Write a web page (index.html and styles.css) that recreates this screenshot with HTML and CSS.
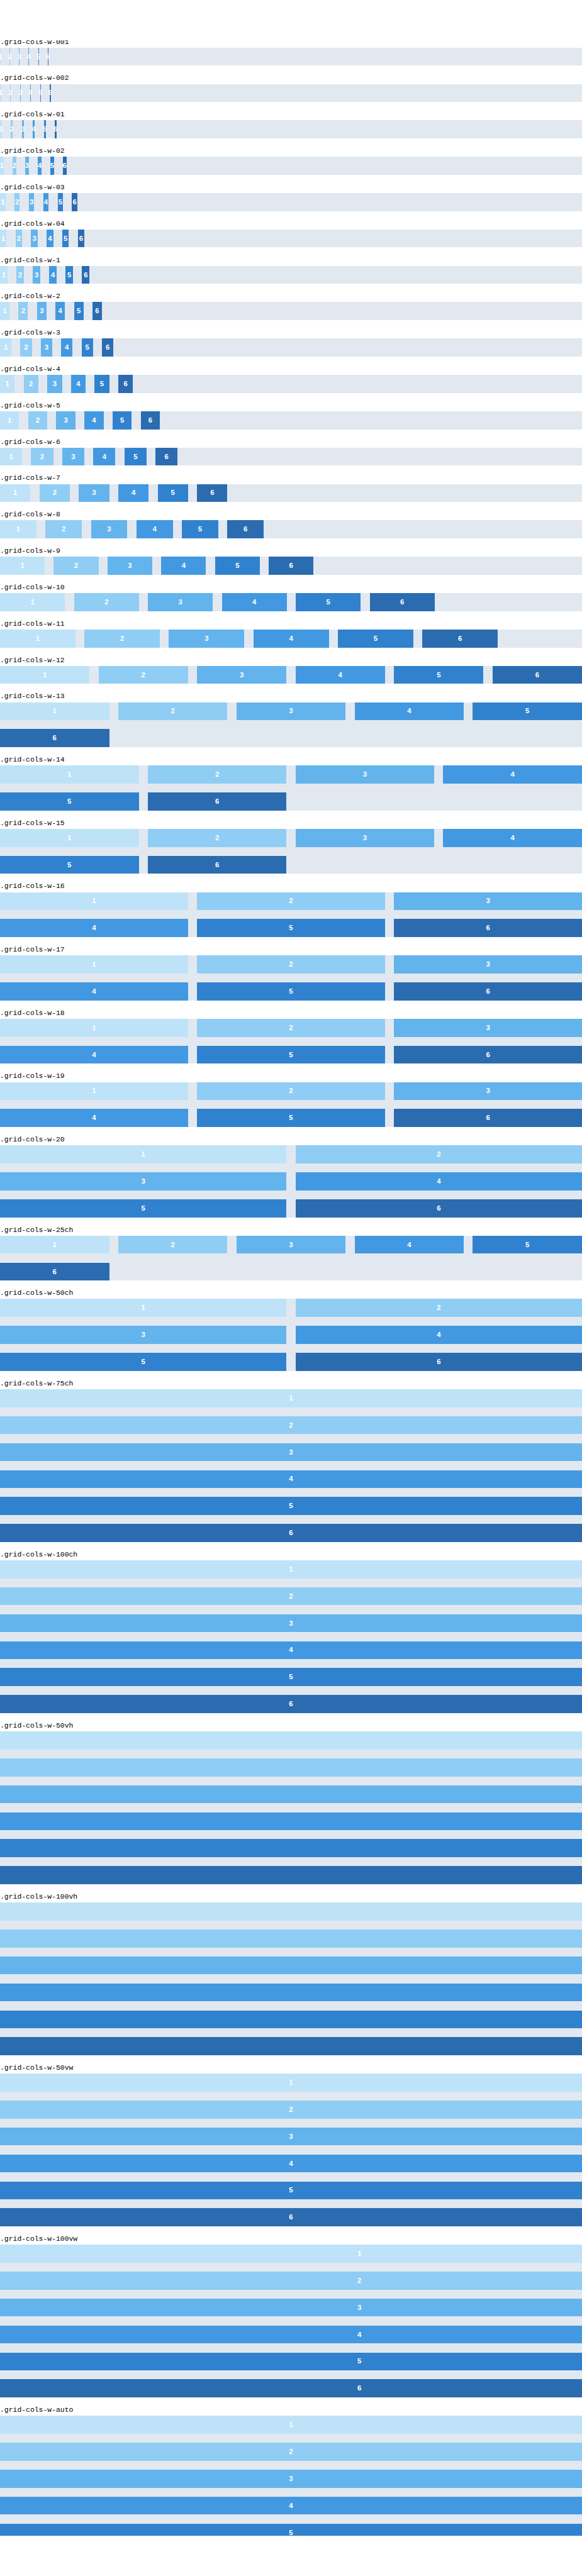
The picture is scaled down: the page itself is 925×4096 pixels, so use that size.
FILE: index.html
```html
<!DOCTYPE html>
<html lang="en">
<head>
<meta charset="utf-8">
<title>Grid column widths</title>
<link rel="stylesheet" href="styles.css">
</head>
<body>
<main class="viewport">
<div class="list">
<h2>.grid-cols-w-001</h2>
<div class="grid w-001"><b>1</b><b>2</b><b>3</b><b>4</b><b>5</b><b>6</b></div>
<h2>.grid-cols-w-002</h2>
<div class="grid w-002"><b>1</b><b>2</b><b>3</b><b>4</b><b>5</b><b>6</b></div>
<h2>.grid-cols-w-01</h2>
<div class="grid w-01"><b>1</b><b>2</b><b>3</b><b>4</b><b>5</b><b>6</b></div>
<h2>.grid-cols-w-02</h2>
<div class="grid w-02"><b>1</b><b>2</b><b>3</b><b>4</b><b>5</b><b>6</b></div>
<h2>.grid-cols-w-03</h2>
<div class="grid w-03"><b>1</b><b>2</b><b>3</b><b>4</b><b>5</b><b>6</b></div>
<h2>.grid-cols-w-04</h2>
<div class="grid w-04"><b>1</b><b>2</b><b>3</b><b>4</b><b>5</b><b>6</b></div>
<h2>.grid-cols-w-1</h2>
<div class="grid w-1"><b>1</b><b>2</b><b>3</b><b>4</b><b>5</b><b>6</b></div>
<h2>.grid-cols-w-2</h2>
<div class="grid w-2"><b>1</b><b>2</b><b>3</b><b>4</b><b>5</b><b>6</b></div>
<h2>.grid-cols-w-3</h2>
<div class="grid w-3"><b>1</b><b>2</b><b>3</b><b>4</b><b>5</b><b>6</b></div>
<h2>.grid-cols-w-4</h2>
<div class="grid w-4"><b>1</b><b>2</b><b>3</b><b>4</b><b>5</b><b>6</b></div>
<h2>.grid-cols-w-5</h2>
<div class="grid w-5"><b>1</b><b>2</b><b>3</b><b>4</b><b>5</b><b>6</b></div>
<h2>.grid-cols-w-6</h2>
<div class="grid w-6"><b>1</b><b>2</b><b>3</b><b>4</b><b>5</b><b>6</b></div>
<h2>.grid-cols-w-7</h2>
<div class="grid w-7"><b>1</b><b>2</b><b>3</b><b>4</b><b>5</b><b>6</b></div>
<h2>.grid-cols-w-8</h2>
<div class="grid w-8"><b>1</b><b>2</b><b>3</b><b>4</b><b>5</b><b>6</b></div>
<h2>.grid-cols-w-9</h2>
<div class="grid w-9"><b>1</b><b>2</b><b>3</b><b>4</b><b>5</b><b>6</b></div>
<h2>.grid-cols-w-10</h2>
<div class="grid w-10"><b>1</b><b>2</b><b>3</b><b>4</b><b>5</b><b>6</b></div>
<h2>.grid-cols-w-11</h2>
<div class="grid w-11"><b>1</b><b>2</b><b>3</b><b>4</b><b>5</b><b>6</b></div>
<h2>.grid-cols-w-12</h2>
<div class="grid fill-6"><b>1</b><b>2</b><b>3</b><b>4</b><b>5</b><b>6</b></div>
<h2>.grid-cols-w-13</h2>
<div class="grid fill-5"><b>1</b><b>2</b><b>3</b><b>4</b><b>5</b><b>6</b></div>
<h2>.grid-cols-w-14</h2>
<div class="grid fill-4"><b>1</b><b>2</b><b>3</b><b>4</b><b>5</b><b>6</b></div>
<h2>.grid-cols-w-15</h2>
<div class="grid fill-4"><b>1</b><b>2</b><b>3</b><b>4</b><b>5</b><b>6</b></div>
<h2>.grid-cols-w-16</h2>
<div class="grid fill-3"><b>1</b><b>2</b><b>3</b><b>4</b><b>5</b><b>6</b></div>
<h2>.grid-cols-w-17</h2>
<div class="grid fill-3"><b>1</b><b>2</b><b>3</b><b>4</b><b>5</b><b>6</b></div>
<h2>.grid-cols-w-18</h2>
<div class="grid fill-3"><b>1</b><b>2</b><b>3</b><b>4</b><b>5</b><b>6</b></div>
<h2>.grid-cols-w-19</h2>
<div class="grid fill-3"><b>1</b><b>2</b><b>3</b><b>4</b><b>5</b><b>6</b></div>
<h2>.grid-cols-w-20</h2>
<div class="grid fill-2"><b>1</b><b>2</b><b>3</b><b>4</b><b>5</b><b>6</b></div>
<h2>.grid-cols-w-25ch</h2>
<div class="grid fill-5"><b>1</b><b>2</b><b>3</b><b>4</b><b>5</b><b>6</b></div>
<h2>.grid-cols-w-50ch</h2>
<div class="grid fill-2"><b>1</b><b>2</b><b>3</b><b>4</b><b>5</b><b>6</b></div>
<h2>.grid-cols-w-75ch</h2>
<div class="grid"><b>1</b><b>2</b><b>3</b><b>4</b><b>5</b><b>6</b></div>
<h2>.grid-cols-w-100ch</h2>
<div class="grid"><b>1</b><b>2</b><b>3</b><b>4</b><b>5</b><b>6</b></div>
<h2>.grid-cols-w-50vh</h2>
<div class="grid"><b></b><b></b><b></b><b></b><b></b><b></b></div>
<h2>.grid-cols-w-100vh</h2>
<div class="grid"><b></b><b></b><b></b><b></b><b></b><b></b></div>
<h2>.grid-cols-w-50vw</h2>
<div class="grid"><b>1</b><b>2</b><b>3</b><b>4</b><b>5</b><b>6</b></div>
<h2>.grid-cols-w-100vw</h2>
<div class="grid w-100vw"><b>1</b><b>2</b><b>3</b><b>4</b><b>5</b><b>6</b></div>
<h2>.grid-cols-w-auto</h2>
<div class="grid"><b>1</b><b>2</b><b>3</b><b>4</b><b>5</b><b>6</b></div>
</div>
</main>
</body>
</html>
```

FILE: styles.css
```css
html {
  font-size: 11.4254px;
  background: #fff;
}

body {
  margin: 0;
  padding: 5.625rem 0;
  font-family: "Liberation Sans", Arial, sans-serif;
}

.viewport {
  height: 347.25rem;
  overflow: hidden;
}

.list {
  margin-top: -1.5625rem;
}

h2 {
  margin: 0;
  padding: 1.2375rem 0 0.2rem;
  font: 400 1rem/1.125rem "Liberation Mono", "Courier New", monospace;
  color: #000;
}

.grid {
  --cols: minmax(0, 1fr);
  display: grid;
  grid-template-columns: var(--cols);
  grid-auto-rows: 2.5rem;
  gap: 1.25rem;
  background: #e2e8f0;
  overflow: hidden;
}

.grid b {
  display: flex;
  align-items: center;
  justify-content: center;
  line-height: 1.125rem;
  color: #fff;
}

.grid b:nth-child(1) { background: #bee3f8; }
.grid b:nth-child(2) { background: #90cdf4; }
.grid b:nth-child(3) { background: #63b3ed; }
.grid b:nth-child(4) { background: #4299e1; }
.grid b:nth-child(5) { background: #3182ce; }
.grid b:nth-child(6) { background: #2b6cb0; }

/* Fixed column widths */
.w-001 { --cols: repeat(6, 0.075rem); }
.w-002 { --cols: repeat(6, 0.1406rem); }
.w-01 { --cols: repeat(6, 0.2719rem); }
.w-02 { --cols: repeat(6, 0.5rem); }
.w-03 { --cols: repeat(6, 0.7531rem); }
.w-04 { --cols: repeat(6, 0.9156rem); }
.w-1 { --cols: repeat(6, 1.0344rem); }
.w-2 { --cols: repeat(6, 1.3219rem); }
.w-3 { --cols: repeat(6, 1.5875rem); }
.w-4 { --cols: repeat(6, 2.0406rem); }
.w-5 { --cols: repeat(6, 2.6656rem); }
.w-6 { --cols: repeat(6, 3.0781rem); }
.w-7 { --cols: repeat(6, 4.2313rem); }
.w-8 { --cols: repeat(6, 5.075rem); }
.w-9 { --cols: repeat(6, 6.2281rem); }
.w-10 { --cols: repeat(6, 9.0344rem); }
.w-11 { --cols: repeat(6, 10.5rem); }
.w-100vw { --cols: 100rem; }

/* Equal columns filling the row */
.fill-6 { --cols: repeat(6, 1fr); }
.fill-5 { --cols: repeat(5, 1fr); }
.fill-4 { --cols: repeat(4, 1fr); }
.fill-3 { --cols: repeat(3, 1fr); }
.fill-2 { --cols: repeat(2, 1fr); }
```
